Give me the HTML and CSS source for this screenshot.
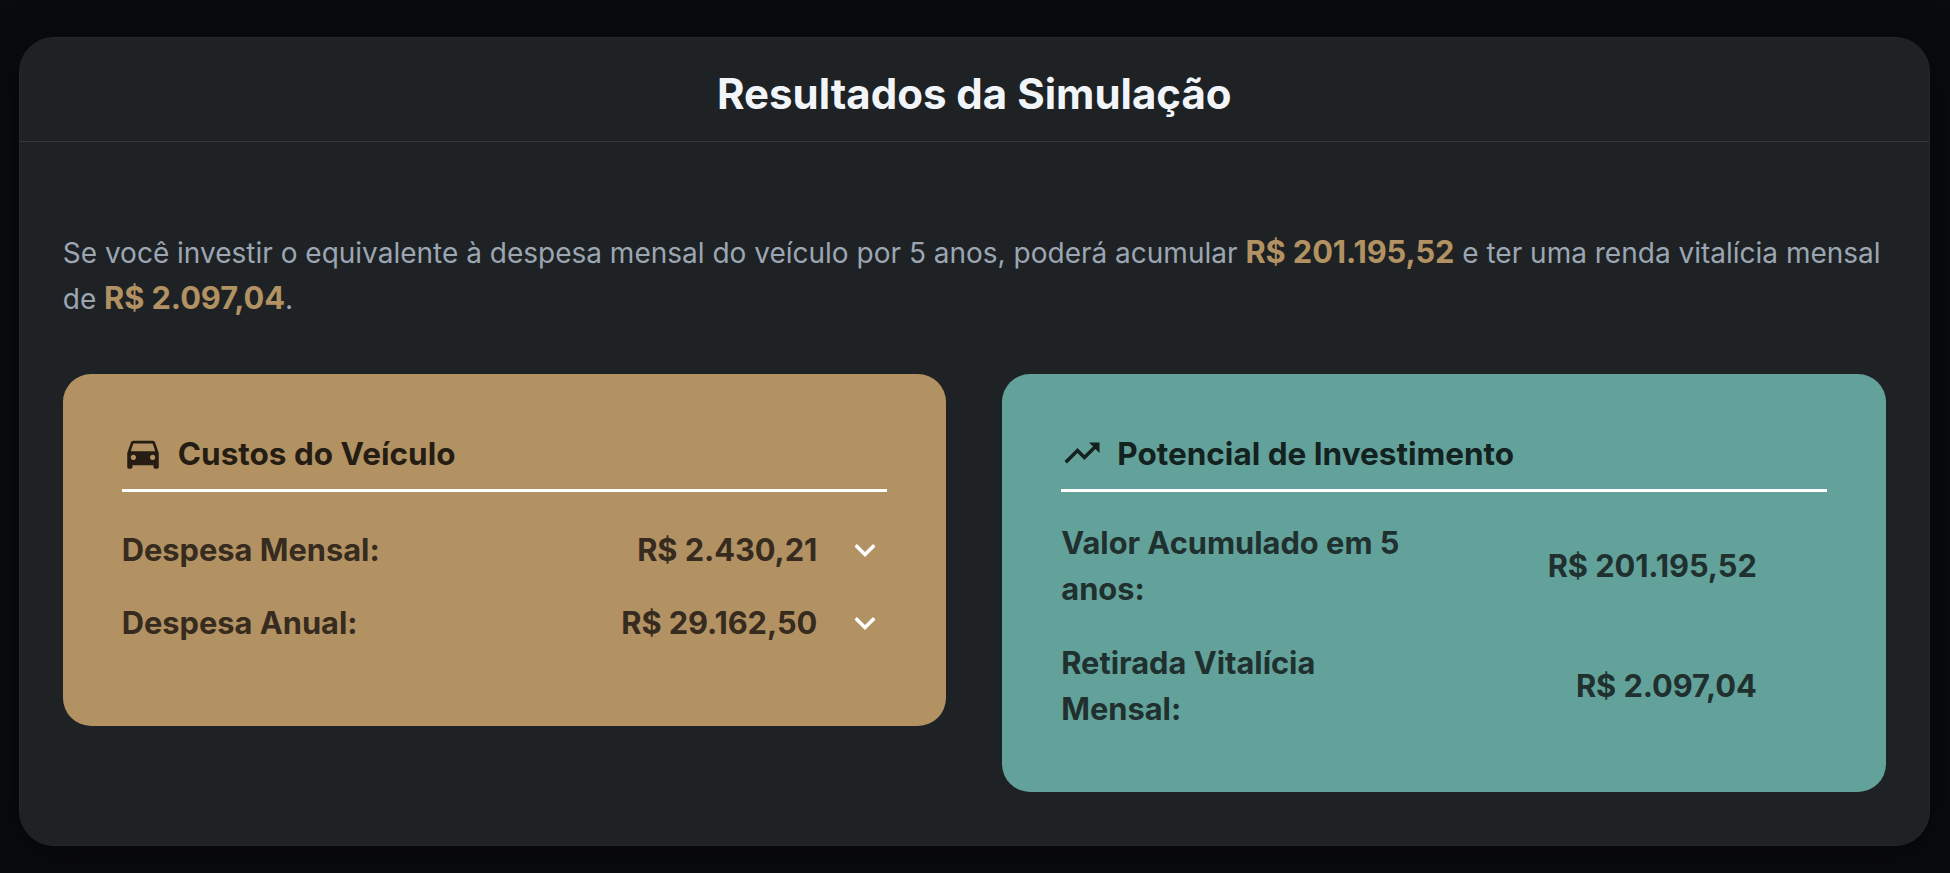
FILE: index.html
```
<!DOCTYPE html>
<html lang="pt-BR">
	<head>
		<meta charset="UTF-8" />
		<meta
			name="viewport"
			content="width=device-width, initial-scale=1.0"
		/>
		<title>Resultados da Simulação</title>
		<link rel="stylesheet" href="styles.css">
	</head>
	<body>
		<section class="results">
			<h1 class="results-header">Resultados da Simulação</h1>

			<div class="results-body">
				<p class="summary">
					Se você investir o equivalente à despesa mensal do veículo por 5 anos, poderá acumular
					<strong>R$ 201.195,52</strong> e ter uma renda vitalícia mensal de
					<strong>R$ 2.097,04</strong>.
				</p>

				<div class="cards">
					<div class="card card-costs">
						<h2 class="card-title">
							<svg class="icon" viewBox="0 0 24 24">
								<path d="M18.92 6.01C18.72 5.42 18.16 5 17.5 5h-11c-.66 0-1.21.42-1.42 1.01L3 12v8c0 .55.45 1 1 1h1c.55 0 1-.45 1-1v-1h12v1c0 .55.45 1 1 1h1c.55 0 1-.45 1-1v-8l-2.08-5.99zM6.5 16c-.83 0-1.5-.67-1.5-1.5S5.67 13 6.5 13s1.5.67 1.5 1.5S7.33 16 6.5 16zm11 0c-.83 0-1.5-.67-1.5-1.5s.67-1.5 1.5-1.5 1.5.67 1.5 1.5-.67 1.5-1.5 1.5zM5 11l1.5-4.5h11L19 11H5z" />
							</svg>
							<span>Custos do Veículo</span>
						</h2>
						<div class="row">
							<span class="label">Despesa Mensal:</span>
							<span class="value">R$ 2.430,21</span>
							<span class="toggle">
								<svg class="icon" viewBox="0 0 24 24">
									<path d="M16.59 8.59 12 13.17 7.41 8.59 6 10l6 6 6-6z" />
								</svg>
							</span>
						</div>
						<div class="row">
							<span class="label">Despesa Anual:</span>
							<span class="value">R$ 29.162,50</span>
							<span class="toggle">
								<svg class="icon" viewBox="0 0 24 24">
									<path d="M16.59 8.59 12 13.17 7.41 8.59 6 10l6 6 6-6z" />
								</svg>
							</span>
						</div>
					</div>

					<div class="card card-investment">
						<h2 class="card-title">
							<svg class="icon" viewBox="0 0 24 24">
								<path d="m16 6 2.29 2.29-4.88 4.88-4-4L2 16.59 3.41 18l6-6 4 4 6.3-6.29L22 12V6z" />
							</svg>
							<span>Potencial de Investimento</span>
						</h2>
						<div class="row">
							<span class="label">Valor Acumulado em 5 anos:</span>
							<span class="value">R$ 201.195,52</span>
							<span class="toggle"></span>
						</div>
						<div class="row">
							<span class="label">Retirada Vitalícia Mensal:</span>
							<span class="value">R$ 2.097,04</span>
							<span class="toggle"></span>
						</div>
					</div>
				</div>
			</div>
		</section>
	</body>
</html>
```
FILE: styles.css
```
* {
	box-sizing: border-box;
}

body {
	margin: 0;
	padding: 37px 20.25px 27px 18.75px;
	background-color: #0a0b0d;
	font-family: Inter, 'Liberation Sans', sans-serif;
	font-size: 28px;
	line-height: 1.5;
}

.results {
	height: 809px;
	border: 1px solid #242628;
	border-radius: 35px;
	background-color: #1e2224;
	box-shadow: 0 7px 42px rgba(0, 0, 0, 0.5);
}

.results-header {
	height: 104px;
	margin: 0;
	padding-top: 21px;
	border-bottom: 1px solid #34383b;
	color: #f1f5f9;
	font-size: 42px;
	font-weight: 700;
	line-height: 69px;
	text-align: center;
}

.results-body {
	padding: 87px 43px 0;
}

.summary {
	margin: 0 0 52.6px;
	color: #9ca6b3;
}

.summary strong {
	color: #b29262;
	font-size: 30.8px;
	font-weight: 700;
	letter-spacing: -0.08px;
}

.cards {
	display: grid;
	grid-template-columns: 1fr 1fr;
	gap: 56px;
	align-items: start;
}

.card {
	padding: 58px 59px 0;
	border-radius: 28px;
}

.card-costs {
	height: 352px;
	background-color: #b29262;
	color: #362b1e;
}

.card-investment {
	height: 418px;
	background-color: #63a29a;
	color: #1f302f;
}

.icon {
	display: block;
	width: 42px;
	height: 42px;
	fill: currentColor;
}

.card-title {
	display: flex;
	align-items: center;
	gap: 14px;
	height: 60px;
	margin: 0 0 14px;
	padding-bottom: 14px;
	border-bottom: 3px solid #fff;
	font-size: 31.5px;
	font-weight: 700;
	line-height: 43px;
}

.card-costs .card-title {
	margin-bottom: 22px;
	color: #251d13;
}

.card-investment .card-title {
	color: #13211f;
}

.row {
	display: grid;
	grid-template-columns: 1fr 1fr 70px;
	align-items: center;
	padding: 14px 0;
	font-size: 30.8px;
	font-weight: 700;
	line-height: 46px;
}

.card-costs .row {
	height: 73px;
	padding: 0;
}

.value {
	letter-spacing: -0.08px;
	text-align: right;
}

.toggle .icon {
	margin: 0 1px 0 auto;
	fill: #fff;
}
```
